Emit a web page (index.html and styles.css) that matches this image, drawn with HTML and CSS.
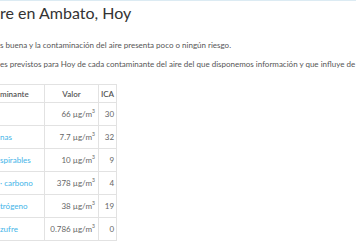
FILE: index.html
```
<!DOCTYPE html>
<html lang="es">

<head>
    <meta charset="UTF-8">
    <meta name="viewport" content="width=device-width, initial-scale=1.0">
    <title>Calidad del aire en Ambato</title>
    <link rel="stylesheet" href="styles.css">
</head>

<body>
    <div class="content">
        <h2 class="title">re en Ambato, Hoy</h2>
        <p class="text">s buena y la contaminación del aire presenta poco o ningún riesgo.</p>
        <p class="text nowrap">es previstos para Hoy de cada contaminante del aire del que disponemos información y que influye de m</p>

        <!-- Tabla de contaminantes -->
        <table class="pollutants">
            <thead>
                <tr>
                    <th class="name">minante</th>
                    <th class="value">Valor</th>
                    <th class="ica">ICA</th>
                </tr>
            </thead>
            <tbody>
                <tr>
                    <td class="name"></td>
                    <td class="value">66 µg/m<sup>3</sup></td>
                    <td class="ica">30</td>
                </tr>
                <tr>
                    <td class="name"><a href="#">nas</a></td>
                    <td class="value">7.7 µg/m<sup>3</sup></td>
                    <td class="ica">32</td>
                </tr>
                <tr>
                    <td class="name"><a href="#">spirables</a></td>
                    <td class="value">10 µg/m<sup>3</sup></td>
                    <td class="ica">9</td>
                </tr>
                <tr>
                    <td class="name"><a href="#">· carbono</a></td>
                    <td class="value">378 µg/m<sup>3</sup></td>
                    <td class="ica">4</td>
                </tr>
                <tr>
                    <td class="name"><a href="#">trógeno</a></td>
                    <td class="value">38 µg/m<sup>3</sup></td>
                    <td class="ica">19</td>
                </tr>
                <tr>
                    <td class="name"><a href="#">zufre</a></td>
                    <td class="value">0.786 µg/m<sup>3</sup></td>
                    <td class="ica">0</td>
                </tr>
            </tbody>
        </table>
    </div>
</body>

</html>
```

FILE: styles.css
```
body {
    margin: 0;
    overflow: hidden;
    background-color: #fff;
    color: #555;
    font-family: Lato, sans-serif;
    border-top: 1px solid #dcebf3;
}

.content {
    padding-top: 3px;
}

.title {
    margin: 0;
    font-size: 16px;
    line-height: 18px;
    font-weight: 400;
    color: #333;
}

.text {
    margin: 0;
    font-size: 8px;
    line-height: 19px;
    color: #555;
}

.text:first-of-type {
    margin-top: 14px;
}

.nowrap {
    white-space: nowrap;
}

.pollutants {
    margin-top: 10px;
    border-collapse: collapse;
    font-size: 8px;
    color: #666;
}

.pollutants th,
.pollutants td {
    border: 1px solid #e2e2e2;
    padding: 0 3px;
}

.pollutants th {
    height: 16px;
    padding-top: 1px;
    font-weight: 600;
    color: #555;
}

.pollutants td {
    height: 22px;
}

.pollutants .name {
    width: 41px;
    text-align: left;
    border-left: none;
    padding-left: 0;
}

.pollutants .value {
    width: 47px;
    text-align: right;
}

.pollutants th.value {
    text-align: center;
}

.pollutants .ica {
    width: 12px;
    padding: 0 2px;
    text-align: right;
}

.pollutants th.ica {
    text-align: center;
}

.pollutants sup {
    font-size: 5px;
    line-height: 0;
}

.pollutants a {
    color: #3fb4e8;
    text-decoration: none;
}
```
